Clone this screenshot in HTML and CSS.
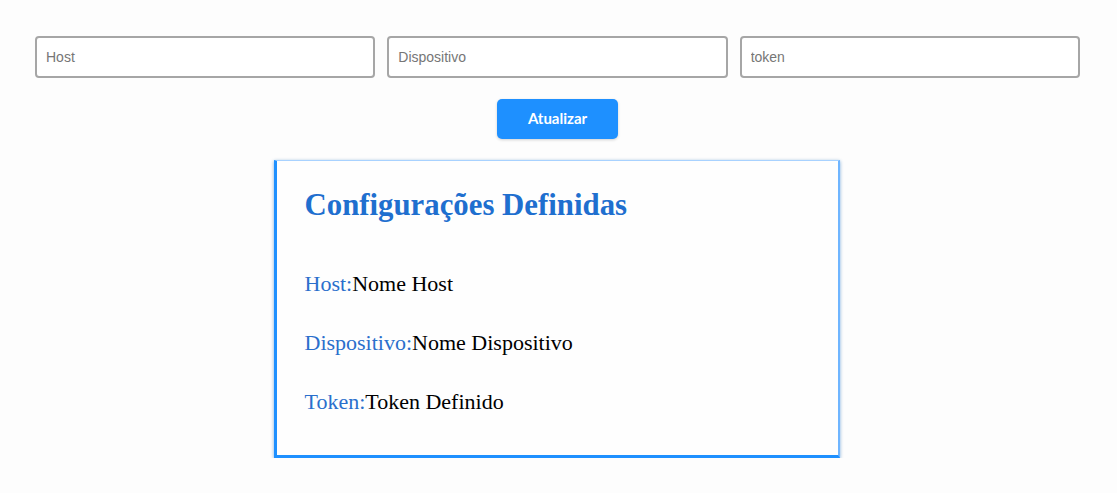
FILE: index.html
```html
<!DOCTYPE html>
<html lang="pt-BR">
<head>
<meta charset="utf-8">
<title>Configurações</title>
<link rel="stylesheet" href="styles.css">
</head>
<body>
<main class="page">
  <form class="config-form">
    <div class="fields">
      <input class="field" type="text" placeholder="Host">
      <input class="field" type="text" placeholder="Dispositivo">
      <input class="field" type="text" placeholder="token">
    </div>
    <button class="btn" type="button">Atualizar</button>
  </form>
  <section class="card">
    <h2 class="card-title">Configurações Definidas</h2>
    <p class="item"><span class="label">Host:</span>Nome Host</p>
    <p class="item"><span class="label">Dispositivo:</span>Nome Dispositivo</p>
    <p class="item"><span class="label">Token:</span>Token Definido</p>
  </section>
</main>
</body>
</html>
```
FILE: styles.css
```css
html, body {
  margin: 0;
  padding: 0;
  background: #fdfdfd;
}
.page {
  padding: 36px 37px 0 35px;
  display: flex;
  flex-direction: column;
  align-items: center;
}
.config-form {
  width: 100%;
  display: flex;
  flex-direction: column;
  align-items: center;
}
.fields {
  width: 100%;
  display: grid;
  grid-template-columns: 1fr 1fr 1fr;
  gap: 12px;
}
.field {
  box-sizing: border-box;
  height: 42px;
  border: 2px solid #a6a6a6;
  border-radius: 4px;
  padding: 0 9px;
  font-family: "Liberation Sans", Arial, sans-serif;
  font-size: 14px;
  color: #333;
  background: #fff;
  outline: none;
}
.field::placeholder {
  color: #767676;
}
.btn {
  margin-top: 21px;
  width: 121px;
  height: 40px;
  padding: 0 0 2px 0;
  border: none;
  border-radius: 5px;
  background: #1e90ff;
  color: #fff;
  font-family: Lato, "Liberation Sans", sans-serif;
  font-weight: 700;
  font-size: 15px;
  box-shadow: 0 1px 3px rgba(0, 0, 0, 0.18);
  cursor: pointer;
}
.card {
  box-sizing: border-box;
  margin-top: 21px;
  margin-right: 2px;
  width: 566px;
  padding: 27px 28px 40px 28px;
  background: #fefefe;
  border-top: 1px solid #a8d2ff;
  border-right: 2px solid #6fb5ff;
  border-left: 3px solid #1e90ff;
  border-bottom: 3px solid #1e90ff;
  box-shadow: 0 1px 3px rgba(30, 144, 255, 0.45), 0 1px 4px rgba(0, 0, 0, 0.15);
  font-family: "Liberation Serif", "Times New Roman", serif;
}
.card-title {
  margin: 0 0 49px 0;
  font-size: 30.8px;
  line-height: 34px;
  font-weight: 700;
  color: #1f6fcf;
}
.item {
  margin: 0 0 33px 0;
  font-size: 22px;
  line-height: 26px;
  color: #000;
}
.item:last-child {
  margin-bottom: 0;
}
.label {
  color: #2a6fcc;
}
```
